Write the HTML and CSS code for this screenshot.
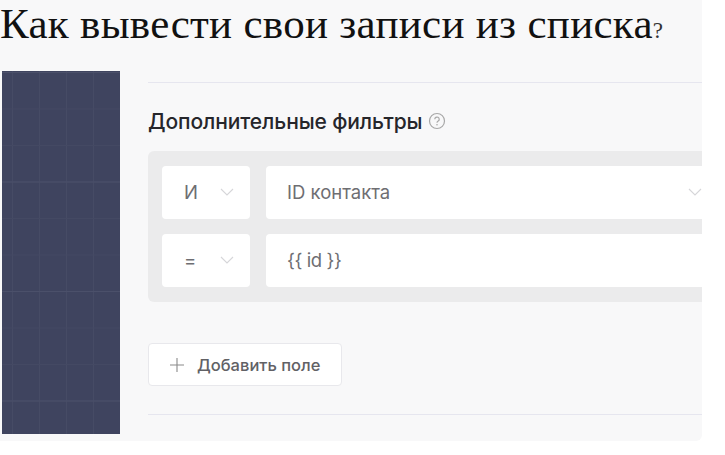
FILE: index.html
```html
<!DOCTYPE html>
<html>

<head>
    <title>Как вывести свои записи из списка?</title>
    <link rel="stylesheet" href="styles.css">
</head>

<body>
    <div class="shot">
        <h1>Как вывести свои записи из списка<span class="question">?</span></h1>
        <div class="layout">
            <div class="sidebar"></div>
            <div class="content">
                <hr class="divider">
                <div class="filters-title">
                    Дополнительные фильтры
                    <svg class="help" width="18" height="18" viewBox="0 0 18 18">
                        <circle cx="9" cy="9" r="7.5" fill="none" stroke="#a8a8a8" stroke-width="1.2" />
                        <path d="M6.8 7.3a2.2 2.2 0 1 1 3.4 1.8c-.8.5-1.2.9-1.2 1.7" fill="none" stroke="#a8a8a8" stroke-width="1.2" />
                        <circle cx="9" cy="12.8" r=".8" fill="#a8a8a8" />
                    </svg>
                </div>
                <div class="filter-box">
                    <div class="filter-row">
                        <div class="field field-small">
                            <span>И</span>
                            <svg class="chevron" width="14" height="8" viewBox="0 0 14 8"><path d="M1 1l6 6 6-6" /></svg>
                        </div>
                        <div class="field field-wide">
                            <span>ID контакта</span>
                            <svg class="chevron" width="14" height="8" viewBox="0 0 14 8"><path d="M1 1l6 6 6-6" /></svg>
                        </div>
                    </div>
                    <div class="filter-row">
                        <div class="field field-small">
                            <span>=</span>
                            <svg class="chevron" width="14" height="8" viewBox="0 0 14 8"><path d="M1 1l6 6 6-6" /></svg>
                        </div>
                        <div class="field field-wide">
                            <span class="value">{{ id }}</span>
                        </div>
                    </div>
                </div>
                <button class="add-button">
                    <svg width="14" height="14" viewBox="0 0 14 14"><path d="M7 0v14M0 7h14" fill="none" stroke="#8a8a8a" stroke-width="1.1" /></svg>
                    Добавить поле
                </button>
                <hr class="divider divider-bottom">
            </div>
        </div>
    </div>
</body>

</html>
```

FILE: styles.css
```css
body {
    margin: 0;
    background: #fff;
}

.shot {
    width: 702px;
    height: 441px;
    overflow: hidden;
    background: #f8f8f9;
    border-radius: 0 0 6px 0;
}

h1 {
    margin: 0;
    height: 71px;
    padding-top: 1px;
    box-sizing: border-box;
    font-family: "Liberation Serif", serif;
    font-size: 43px;
    font-weight: normal;
    letter-spacing: 0.3px;
    line-height: 46px;
    color: #111;
    white-space: nowrap;
}

.question {
    font-size: 23px;
    letter-spacing: 0;
    color: #333;
}

.layout {
    display: flex;
    padding-left: 2px;
}

.sidebar {
    flex: none;
    width: 118px;
    height: 363px;
    background-color: #3f445f;
    background-image:
        linear-gradient(#4b506a 1px, transparent 1px),
        linear-gradient(#444963 1px, transparent 1px),
        linear-gradient(90deg, #464b65 1px, transparent 1px);
    background-size: 100% 109.5px, 100% 36.5px, 27px 100%;
    background-position: 0 1px, 0 1px, 10px 0;
}

.content {
    flex: none;
    width: 640px;
    margin-left: 28px;
}

.divider {
    margin: 11px 0 0;
    height: 1px;
    border: 0;
    background: #e6e6ef;
}

.divider-bottom {
    margin-top: 28px;
}

.filters-title {
    display: flex;
    align-items: center;
    gap: 6px;
    margin-top: 27px;
    height: 22px;
    font-family: Inter, sans-serif;
    font-size: 21px;
    font-weight: 500;
    letter-spacing: -0.1px;
    color: #26262b;
}

.filter-box {
    display: flex;
    flex-direction: column;
    gap: 15.5px;
    margin-top: 19px;
    padding: 15px 14px;
    height: 151px;
    box-sizing: border-box;
    background: #ebebec;
    border-radius: 6px;
}

.filter-row {
    display: flex;
    gap: 16px;
}

.field {
    display: flex;
    align-items: center;
    justify-content: space-between;
    height: 52.5px;
    box-sizing: border-box;
    padding: 0 22px;
    background: #fff;
    border-radius: 4px;
    font-family: Inter, sans-serif;
    font-size: 18.5px;
    color: #6e6e72;
}

.value {
    letter-spacing: -0.4px;
}

.field-small {
    flex: none;
    width: 88px;
    padding-right: 16px;
}

.field-wide {
    flex: none;
    width: 443px;
    padding-right: 0;
    padding-left: 21px;
}

.field-wide .chevron {
    margin-right: 7px;
}

.chevron path {
    fill: none;
    stroke: #d6d6d9;
    stroke-width: 1.1;
}

.add-button {
    display: flex;
    align-items: center;
    gap: 13px;
    margin-top: 41px;
    padding: 0 10px 0 21px;
    width: 194px;
    height: 43px;
    box-sizing: border-box;
    background: #fff;
    border: 1px solid #e8e8ec;
    border-radius: 4px;
    font-family: Inter, sans-serif;
    font-size: 16.5px;
    font-weight: 500;
    white-space: nowrap;
    color: #616165;
}
```
